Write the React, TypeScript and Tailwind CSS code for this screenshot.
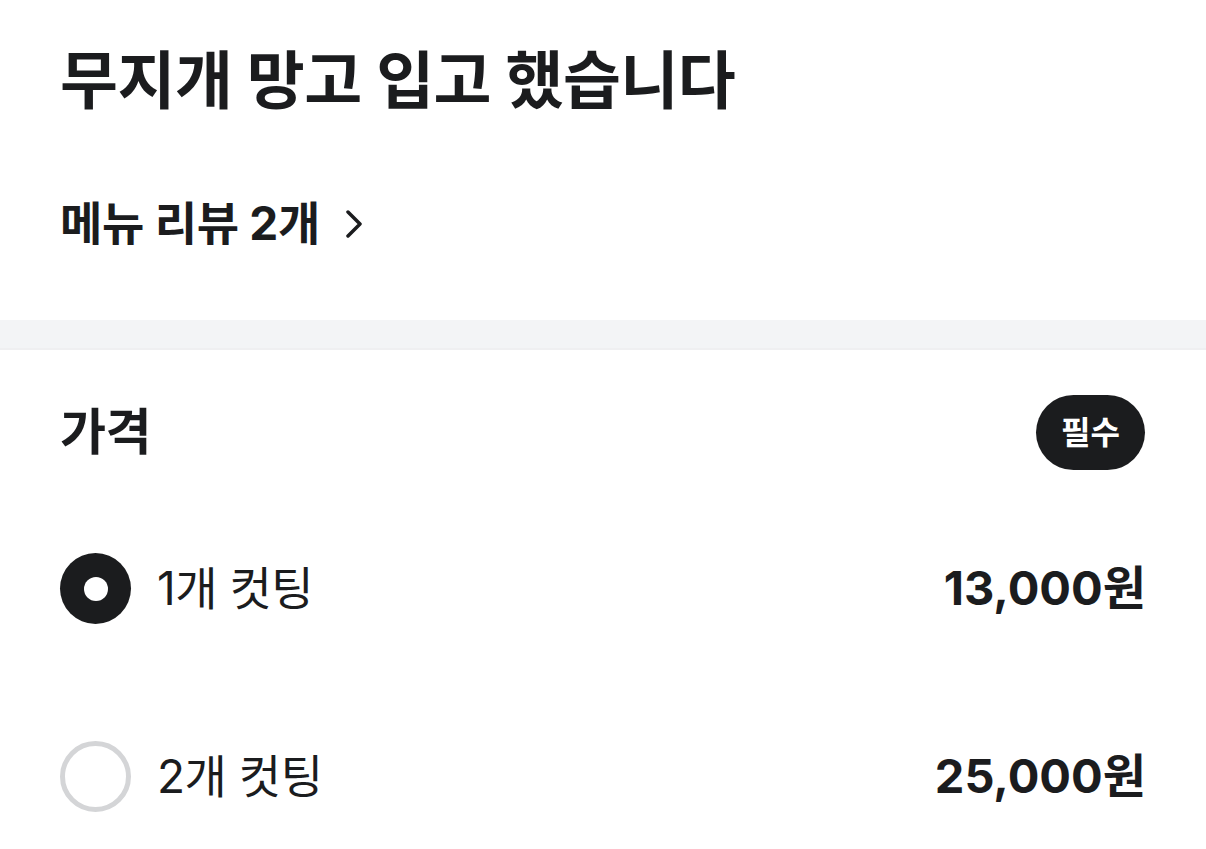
const kr = "font-['Inter','Noto_Sans_CJK_KR',sans-serif]"

const Radio = ({ checked }: { checked: boolean }) =>
  checked ? (
    <div className="flex h-[71px] w-[71px] items-center justify-center rounded-full bg-[#1b1c1e]">
      <div className="h-[24px] w-[24px] rounded-full bg-white" />
    </div>
  ) : (
    <div className="h-[71px] w-[71px] rounded-full border-[5px] border-[#d4d5d7]" />
  )

const options = [
  { label: '1개 컷팅', price: '13,000원', checked: true },
  { label: '2개 컷팅', price: '25,000원', checked: false },
]

const App = () => {
  return (
    <div className={`min-h-[849px] bg-white text-[#1b1c1e] ${kr}`}>
      <div className="px-[60px] pt-[37px] pb-[68px]">
        <h1 className="text-[63px] font-bold leading-[86px] tracking-[-0.5px]">무지개 망고 입고 했습니다</h1>
        <div className="mt-[71px] flex items-center gap-[26px]">
          <span className="text-[46px] font-bold leading-[58px] tracking-[-0.3px]">메뉴 리뷰 2개</span>
          <svg width="16" height="30" viewBox="0 0 16 30" fill="none" className="mt-[2px]">
            <path d="M2 3l12 12L2 27" stroke="#1b1c1e" strokeWidth="3.5" strokeLinecap="round" strokeLinejoin="round" />
          </svg>
        </div>
      </div>
      <div className="h-[30px] border-b-2 border-[#efeff1] bg-[#f3f4f6]" />
      <div className="px-[60px] pt-[45px]">
        <div className="flex items-center justify-between">
          <h2 className="text-[50px] font-bold leading-[75px] tracking-[-0.5px]">가격</h2>
          <span className="mr-[1px] flex h-[75px] items-center rounded-full bg-[#1b1c1e] px-[25px] text-[32px] font-bold text-white">
            필수
          </span>
        </div>
        <div className="mt-[83px] flex flex-col gap-[117px]">
          {options.map((o) => (
            <div key={o.label} className="flex items-center justify-between">
              <div className="flex items-center gap-[26px]">
                <Radio checked={o.checked} />
                <span className="text-[46px] font-normal tracking-[-0.5px]">{o.label}</span>
              </div>
              <span className="text-[47px] font-bold">{o.price}</span>
            </div>
          ))}
        </div>
      </div>
    </div>
  )
}

export default App
